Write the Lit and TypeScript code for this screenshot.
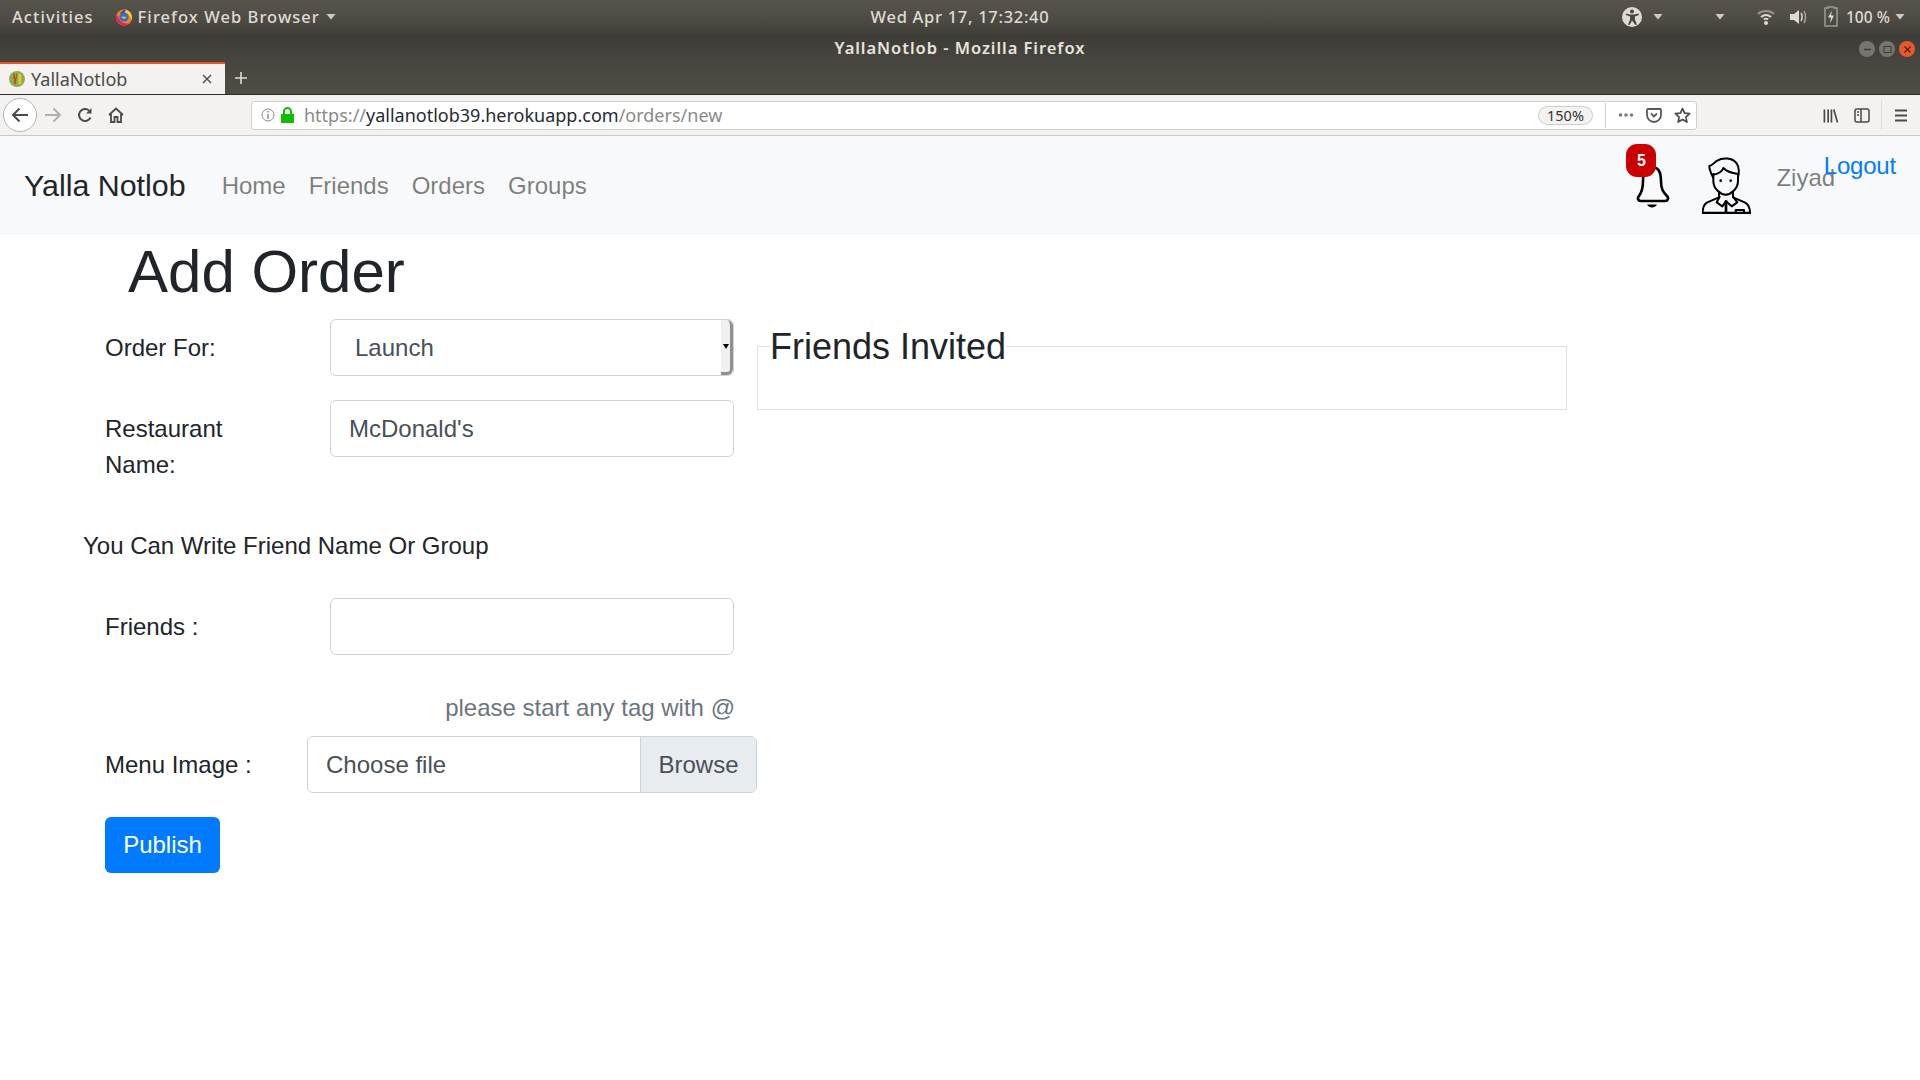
import { LitElement, css, html, svg } from "lit";
import { customElement } from "lit/decorators.js";

const caret = svg`<svg class="caret" width="10" height="6" viewBox="0 0 10 6"><path d="M.5 0h9L5 5.500z" fill="currentColor"/></svg>`;

const firefox = html`<svg width="18" height="18" viewBox="0 0 18 18">
  <circle cx="9" cy="9.500" r="8" fill="#f58220"/>
  <path d="M1 9.500a8 8 0 0 0 13.500 5.800C10 16.500 4 14 3 7.500 2 8 1 8.500 1 9.500z" fill="#e3265f"/>
  <path d="M10 1.500c4 .5 7 4 7 8 0 1-.2 2-.6 3-.4-4-3-7-6.400-8z" fill="#ffcb2f"/>
  <circle cx="9" cy="9" r="4.600" fill="#2e6fd0"/>
  <path d="M5 6c1-3 4-4.500 6.500-4-1.500 1-2 2-2 3-1.500 0-3 0-4.500 1z" fill="#3a4bb0"/>
  <path d="M6 9c1.500-.8 3.500-.8 5.500.2-1 1.800-3.500 2.300-5.500-.2z" fill="#f7b733"/>
</svg>`;

const person = html`<svg class="person" width="49" height="57" viewBox="24 19 147 171" fill="none" stroke="#000" stroke-width="6" stroke-linecap="round" stroke-linejoin="round">
  <path d="M57 80C52 70 45 55 46 46c9-1 14-11 24-16 15-10 45-10 58 8 10 14 7 30 4 42"/>
  <path d="M57 72c18-2 28-12 31-20 12 13 30 16 44 18"/>
  <path d="M58 70v20c0 25 22 42 37 42s37-17 37-42V70"/>
  <circle cx="80" cy="90" r="4" fill="#000" stroke="none"/>
  <circle cx="110" cy="90" r="4" fill="#000" stroke="none"/>
  <path d="M75 125v15l-35 15c-10 5-14 15-14 32h142c0-17-6-27-16-32l-35-15v-15"/>
  <path d="M77 138l-9 17 17 12 11-15 17 15 17-12-13-17"/>
  <path d="M96 152v35" stroke-width="8"/>
  <path d="M125 187v-9h25v9"/>
  <path d="M26 187h142" stroke-width="7"/>
</svg>`;

@customElement("app-root")
export class AppRoot extends LitElement {
  static styles = css`
    :host {
      display: block;
      width: 1920px;
      height: 1080px;
      overflow: hidden;
      background: #fff;
      font-family: "Liberation Sans", Arial, sans-serif;
      color: #212529;
    }
    * {
      box-sizing: border-box;
    }

    /* desktop + window chrome */
    .dark {
      height: 94px;
      background: linear-gradient(#57544c 0, #4e4b45 20px, #3e3c37 36px, #47453f 60px, #504d46 94px);
      position: relative;
    }
    .panel {
      height: 33px;
      display: flex;
      align-items: center;
      padding: 0 15px 0 12px;
      color: #dfdbd2;
      font: 500 16.500px "Noto Sans", sans-serif;
      letter-spacing: 1.050px;
      position: relative;
    }
    .panel .caret {
      color: #cfcbc3;
    }
    .panel .app {
      display: flex;
      align-items: center;
      gap: 4px;
      margin-left: 21px;
    }
    .panel .app svg:first-child {
      margin-right: 1px;
    }
    .panel .app .caret {
      margin-left: 2px;
    }
    .clock {
      position: absolute;
      left: 0;
      right: 0;
      text-align: center;
      letter-spacing: 0.700px;
    }
    .tray {
      margin-left: auto;
      display: flex;
      align-items: center;
      letter-spacing: 0;
    }
    .tray .pct {
      width: 43px;
      margin: 0 6px 0 8px;
      white-space: nowrap;
      font-size: 15.500px;
    }
    .title {
      position: absolute;
      top: 36px;
      left: 0;
      right: 0;
      text-align: center;
      color: #e8e4dc;
      font: 600 16.500px "Noto Sans", sans-serif;
      letter-spacing: 0.950px;
    }
    .winbtns {
      position: absolute;
      top: 41px;
      right: 5px;
      display: flex;
      gap: 4px;
    }
    .winbtns span {
      width: 16px;
      height: 16px;
      border-radius: 50%;
      background: #77756e;
      display: flex;
      align-items: center;
      justify-content: center;
    }
    .winbtns span.close {
      background: #e9582c;
    }
    .tab {
      position: absolute;
      left: 0;
      top: 62px;
      width: 225px;
      height: 33px;
      background: #f3f2f0;
      border-top: 2px solid #e95420;
      display: flex;
      align-items: center;
      padding: 0 8px 1px 9px;
      color: #4a4a47;
      font: 18px "Noto Sans", sans-serif;
      gap: 6px;
    }
    .tab .x {
      margin-left: auto;
      margin-right: 4px;
    }
    .plus {
      position: absolute;
      left: 233px;
      top: 70px;
    }
    .toolbar {
      height: 42px;
      background: #f3f2f0;
      border-top: 1px solid #2e2c28;
      border-bottom: 1px solid #c9c8c5;
      display: flex;
      align-items: center;
      color: #4a4a47;
      position: relative;
    }
    .back {
      width: 34px;
      height: 34px;
      margin-left: 3px;
      border: 1px solid #b5b5b3;
      border-radius: 50%;
      background: #fff;
      display: flex;
      align-items: center;
      justify-content: center;
    }
    .navicons {
      display: flex;
      align-items: center;
      gap: 15px;
      margin-left: 7px;
      width: 207px;
    }
    .urlbar {
      width: 1446px;
      height: 29px;
      background: #fff;
      border: 1px solid #cfcfcd;
      border-radius: 3px;
      display: flex;
      align-items: center;
      padding: 0 5px 0 9px;
      font: 18px "Noto Sans", sans-serif;
      color: #8a8a88;
    }
    .urlbar b {
      font-weight: 400;
      color: #1f2a33;
    }
    .url {
      margin-left: 10px;
      flex: 1;
    }
    .lock {
      margin-left: 6px;
    }
    .zoom {
      width: 55px;
      height: 19px;
      border: 1px solid #cdcdcb;
      border-radius: 10px;
      background: #f3f2f0;
      font-size: 14.500px;
      color: #333;
      text-align: center;
      line-height: 17px;
    }
    .sep {
      width: 1px;
      height: 25px;
      background: #cfcfcd;
      margin: 0 12px 0 12px;
    }
    .urlbar .pageicons {
      display: flex;
      align-items: center;
      gap: 12px;
    }
    .righticons {
      display: flex;
      align-items: center;
      gap: 16px;
      margin-left: 126px;
    }
    .sep2 {
      width: 1px;
      height: 30px;
      background: #dcdcda;
      margin: 0 -3px 0 -5px;
    }

    /* navbar */
    .navbar {
      height: 99px;
      background: #f8f9fa;
      display: flex;
      align-items: center;
      padding: 1px 24px 0;
      position: relative;
    }
    .brand {
      font-size: 30.400px;
      color: #212529;
      margin: -1px 24.500px 0 0;
    }
    .navbar a {
      font-size: 24px;
      color: rgba(0, 0, 0, 0.5);
      padding: 0 11.500px;
    }
    .right {
      margin-left: auto;
      display: flex;
      align-items: center;
    }
    .bell {
      position: relative;
      width: 44px;
      height: 60px;
      margin-right: 32px;
      padding: 3px 0 0 10px;
    }
    .badge {
      position: absolute;
      left: 0;
      top: -12px;
      width: 30px;
      height: 33px;
      border-radius: 11px;
      background: #cc0000;
      color: #fff;
      font-size: 16px;
      font-weight: 700;
      display: flex;
      align-items: center;
      justify-content: center;
    }
    .person {
      margin-top: -2px;
    }
    .user {
      font-size: 24px;
      color: rgba(0, 0, 0, 0.5);
      margin-left: 25px;
      margin-top: -17px;
    }
    .navbar a.logout {
      color: #007bff;
      padding: 0;
      margin-left: -11.300px;
      margin-top: -41px;
      letter-spacing: -0.200px;
    }

    /* page */
    .main {
      display: flex;
      align-items: flex-start;
      padding-top: 1px;
    }
    .col {
      width: 757px;
      flex: none;
      padding-left: 105px;
      font-size: 24px;
      line-height: 36px;
    }
    h1 {
      font-size: 60px;
      font-weight: 500;
      line-height: 72px;
      margin: 0 0 11px 23px;
    }
    .row {
      display: flex;
      margin-bottom: 24px;
    }
    .row label {
      width: 225px;
      padding-top: 11px;
      flex: none;
    }
    .restaurant label {
      width: 140px;
      margin-right: 85px;
    }
    .control {
      width: 404px;
      height: 57px;
      border: 1px solid #ced4da;
      border-radius: 6px;
      padding: 0 18px;
      display: flex;
      align-items: center;
      color: #495057;
      background: #fff;
    }
    .select {
      padding-left: 24px;
      position: relative;
    }
    .spinner {
      position: absolute;
      right: 0;
      top: 0;
      bottom: 0;
      width: 12px;
      background: #f0f0ef;
      border-right: 3px solid #8f8f8f;
      border-bottom: 3px solid #8f8f8f;
      border-radius: 0 6px 6px 0;
      display: flex;
      align-items: center;
      justify-content: center;
    }
    .spinner i {
      border: 3.500px solid transparent;
      border-top: 5px solid #000;
      border-bottom: 0;
      margin-top: 1px;
    }
    .restaurant {
      margin-bottom: 45px;
    }
    .hint {
      margin: 0 0 34px -22px;
    }
    .friends {
      margin-bottom: 35px;
    }
    .tagtip {
      width: 630px;
      text-align: right;
      color: #6c757d;
      margin-bottom: 10px;
    }
    .filerow label {
      width: 202px;
    }
    .file {
      width: 450px;
      height: 57px;
      border: 1px solid #ced4da;
      border-radius: 6px;
      display: flex;
      align-items: center;
      padding-left: 18px;
      color: #495057;
      position: relative;
      overflow: hidden;
    }
    .browse {
      margin-left: auto;
      height: 100%;
      width: 116px;
      background: #e9ecef;
      border-left: 1px solid #ced4da;
      display: flex;
      align-items: center;
      justify-content: center;
    }
    .publish {
      width: 115px;
      height: 56px;
      border-radius: 6px;
      border: none;
      background: #007bff;
      color: #fff;
      font: 24px "Liberation Sans", sans-serif;
      padding: 0;
      display: block;
    }
    fieldset {
      width: 810px;
      margin: 89px 0 0;
      padding: 0 12px;
      border: 1px solid #dee2e6;
      min-width: 0;
    }
    legend {
      font-size: 36px;
      line-height: 43px;
      padding: 0;
      color: #212529;
    }
    fieldset div {
      height: 41px;
    }
  `;

  render() {
    return html`
      <div class="dark">
        <div class="panel">
          <span>Activities</span>
          <span class="app">${firefox}Firefox Web Browser${caret}</span>
          <span class="clock">Wed Apr 17, 17:32:40</span>
          <span class="tray">
            <svg width="20" height="20" viewBox="0 0 20 20" style="margin-right:11px">
              <circle cx="10" cy="10" r="10" fill="#dfdbd2"/>
              <circle cx="10" cy="4.500" r="2" fill="#47453f"/>
              <path d="M3.500 6.500l4.500 1h4l4.500-1 .4 1.500-4 1.500v3l2 5-1.500.5L10 13.500 7.600 18l-1.500-.5 2-5v-3l-4-1.500z" fill="#47453f"/>
            </svg>
            ${caret}
            <span style="width:52px"></span>
            ${caret}
            <svg width="18" height="16" viewBox="0 0 18 16" style="margin:0 14px 0 32px" fill="none" stroke="#dfdbd2">
              <path d="M1 5c4-4 12-4 16 0" stroke-width="2" opacity=".5"/>
              <path d="M4 8c3-2.500 7-2.500 10 0" stroke-width="2"/>
              <path d="M7 10.500c1-1 3-1 4 0" stroke-width="2"/>
              <circle cx="9" cy="14" r="2" fill="#dfdbd2" stroke="none"/>
            </svg>
            <svg width="18" height="18" viewBox="0 0 18 18" style="margin-right:17px">
              <path d="M1 6h4l5-4v14l-5-4H1z" fill="#dfdbd2"/>
              <path d="M12 5c1.500 2 1.500 6 0 8" stroke="#dfdbd2" stroke-width="1.500" fill="none"/>
              <path d="M15 3c2 3 2 9 0 12" stroke="#dfdbd2" stroke-width="1.500" fill="none" opacity=".6"/>
            </svg>
            <svg width="14" height="21" viewBox="0 0 14 20">
              <path d="M4 1.500V.500h6v1h3v18H1v-18z" fill="none" stroke="#9c9a93" stroke-width="1.500"/>
              <path d="M8 4L4 11h3l-1 6 4-8H7z" fill="#dfdbd2"/>
            </svg>
            <span class="pct">100 %</span>
            ${caret}
          </span>
        </div>
        <div class="title">YallaNotlob - Mozilla Firefox</div>
        <div class="winbtns">
          <span><svg width="9" height="9"><path d="M1 4.500h7" stroke="#3e3c37" stroke-width="1.500"/></svg></span>
          <span><svg width="9" height="9"><rect x="1" y="1.500" width="7" height="6" fill="none" stroke="#3e3c37"/></svg></span>
          <span class="close"><svg width="9" height="9"><path d="M1.500 1.500l6 6m0-6l-6 6" stroke="#4a2010" stroke-width="1.200"/></svg></span>
        </div>
        <div class="tab">
          <svg width="16" height="16" viewBox="0 0 17 17">
            <circle cx="8.500" cy="8.500" r="8.500" fill="#8cb04a"/>
            <path d="M10 3h3v11h-3z" fill="#e8c53a"/>
            <path d="M5.500 3h1v4h1V3h1v5l-1 1v5h-2V9l-1-1V3z" fill="#b5532a"/>
          </svg>
          YallaNotlob
          <svg class="x" width="12" height="12"><path d="M2 2l8 8m0-8l-8 8" stroke="#4a4a47" stroke-width="1.400"/></svg>
        </div>
        <svg class="plus" width="16" height="16"><path d="M8 2v12M2 8h12" stroke="#dfdbd2" stroke-width="1.600"/></svg>
      </div>
      <div class="toolbar">
        <div class="back">
          <svg width="18" height="16" viewBox="0 0 18 16" fill="none" stroke="#4a4a47" stroke-width="2"><path d="M17 8H2M8.500 1.500L2 8l6.500 6.500"/></svg>
        </div>
        <div class="navicons">
          <svg width="18" height="16" viewBox="0 0 18 16" fill="none" stroke="#b0b0ae" stroke-width="2"><path d="M1 8h15M9.500 1.500L16 8l-6.500 6.500"/></svg>
          <svg width="16" height="16" viewBox="0 0 16 16" fill="none" stroke="#4a4a47" stroke-width="2"><path d="M13.500 10.500A6 6 0 1 1 12 3.500"/><path d="M14.500 1v5.500H9" fill="#4a4a47" stroke="none"/></svg>
          <svg width="16" height="16" viewBox="0 0 16 16" fill="none" stroke="#4a4a47" stroke-width="1.800"><path d="M1 8l7-6.500L15 8M3 7v8h3.500v-5h3v5H13V7"/></svg>
        </div>
        <div class="urlbar">
          <svg width="14" height="14" viewBox="0 0 14 14"><circle cx="7" cy="7" r="6" fill="none" stroke="#8a8a88"/><path d="M7 6v5M7 3v1.500" stroke="#8a8a88" stroke-width="1.500"/></svg>
          <svg class="lock" width="13" height="16" viewBox="0 0 13 16"><path d="M0 7h13v9H0z" fill="#12bc00"/><path d="M3 7V4.500a3.500 3.500 0 0 1 7 0V7" fill="none" stroke="#12bc00" stroke-width="2"/></svg>
          <span class="url">https://<b>yallanotlob39.herokuapp.com</b>/orders/new</span>
          <span class="zoom">150%</span>
          <span class="sep"></span>
          <span class="pageicons">
            <svg width="16" height="16" viewBox="0 0 16 16" fill="#7a7a78"><circle cx="2.500" cy="8" r="1.800"/><circle cx="8" cy="8" r="1.800"/><circle cx="13.500" cy="8" r="1.800"/></svg>
            <svg width="16" height="16" viewBox="0 0 16 16" fill="none" stroke="#5a5a58" stroke-width="1.800"><path d="M2 2h12a1 1 0 0 1 1 1v5a7 7 0 0 1-14 0V3a1 1 0 0 1 1-1z"/><path d="M5 6.500l3 3 3-3"/></svg>
            <svg width="17" height="17" viewBox="0 0 17 17" fill="none" stroke="#4a4a47" stroke-width="1.700" stroke-linejoin="round"><path d="M8.500 1.500l2.100 4.600 5 .6-3.700 3.400 1 5-4.400-2.500-4.400 2.500 1-5L1.400 6.700l5-.6z"/></svg>
          </span>
        </div>
        <div class="righticons">
          <svg width="15" height="15" viewBox="0 0 16 15" stroke="#4a4a47" stroke-width="1.800"><path d="M1.500 1v14M5.500 1v14M9 1v14M11.500 1l4 14"/></svg>
          <svg width="16" height="15" viewBox="0 0 16 15" fill="none" stroke="#4a4a47" stroke-width="1.500"><rect x="1" y="1" width="14" height="13" rx="2"/><path d="M7 1v13M3 4h2M3 7h2" /></svg>
          <span class="sep2"></span>
          <svg width="12" height="13" viewBox="0 0 12 13" stroke="#4a4a47" stroke-width="2"><path d="M0 1.500h12M0 6.500h12M0 11.500h12"/></svg>
        </div>
      </div>

      <nav class="navbar">
        <span class="brand">Yalla Notlob</span>
        <a>Home</a>
        <a>Friends</a>
        <a>Orders</a>
        <a>Groups</a>
        <div class="right">
          <div class="bell">
            <svg width="34" height="50" viewBox="0 0 34 50" fill="none" stroke="#000" stroke-width="2.600" stroke-linecap="round" stroke-linejoin="round">
              <path d="M7 22C7 12 11 8 16 8s9 4 9 14c0 8 2 11 6 15 2 2 1 5-2 5H5c-3 0-4-3-2-5 3-4 4-7 4-15z"/>
              <path d="M11 45.500h10c-1 2-3 3-5 3s-4-1-5-3z" fill="#000" stroke="none"/>
            </svg>
            <span class="badge">5</span>
          </div>
          ${person}
          <span class="user">Ziyad</span>
          <a class="logout">Logout</a>
        </div>
      </nav>

      <div class="main">
        <div class="col">
          <h1>Add Order</h1>
          <div class="row">
            <label>Order For:</label>
            <div class="control select">Launch<span class="spinner"><i></i></span></div>
          </div>
          <div class="row restaurant">
            <label>Restaurant Name:</label>
            <div class="control">McDonald's</div>
          </div>
          <div class="hint">You Can Write Friend Name Or Group</div>
          <div class="row friends">
            <label>Friends :</label>
            <div class="control"></div>
          </div>
          <div class="tagtip">please start any tag with @</div>
          <div class="row filerow">
            <label>Menu Image :</label>
            <div class="file">Choose file<span class="browse">Browse</span></div>
          </div>
          <button class="publish">Publish</button>
        </div>
        <fieldset>
          <legend>Friends Invited</legend>
          <div></div>
        </fieldset>
      </div>
    `;
  }
}
